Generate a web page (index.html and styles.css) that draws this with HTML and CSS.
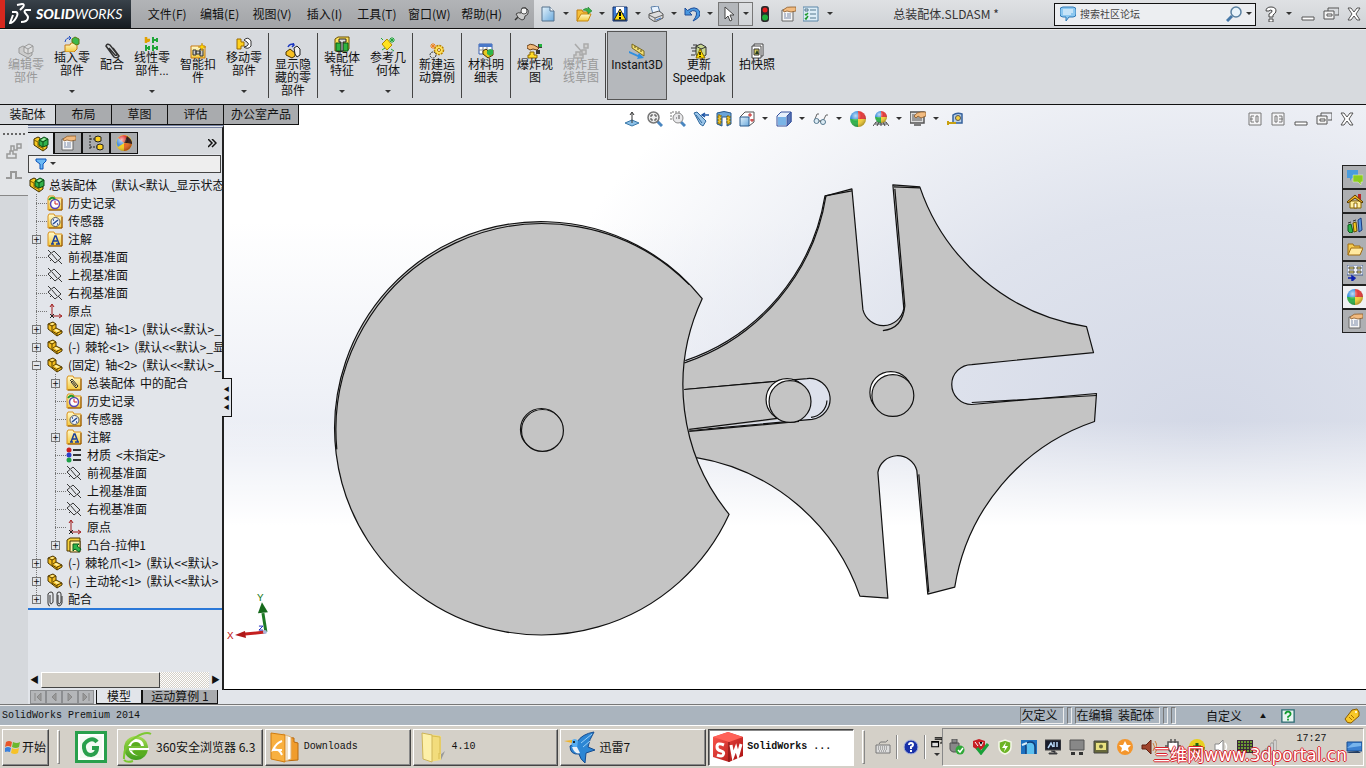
FILE: index.html
```html
<!DOCTYPE html>
<html lang="zh-CN">

<head>
  <meta charset="UTF-8">
  <meta name="viewport" content="width=device-width, initial-scale=1.0">
  <title>总装配体.SLDASM</title>
  <link rel="stylesheet" href="styles.css">
</head>

<body>
  <!-- icon set -->
  <svg class="sprite" width="0" height="0" aria-hidden="true">
    <defs>
      <linearGradient id="g-yellow" x1="0" y1="0" x2="0" y2="1">
        <stop offset="0" stop-color="#fffbd0" />
        <stop offset="1" stop-color="#f3c93c" />
      </linearGradient>
      <linearGradient id="g-blue" x1="0" y1="0" x2="1" y2="1">
        <stop offset="0" stop-color="#e4f3fc" />
        <stop offset="1" stop-color="#6aa9dc" />
      </linearGradient>
      <linearGradient id="g-green" x1="0" y1="0" x2="0" y2="1">
        <stop offset="0" stop-color="#a4dc50" />
        <stop offset="1" stop-color="#3f9d1c" />
      </linearGradient>
      <linearGradient id="g-red" x1="0" y1="0" x2="1" y2="1">
        <stop offset="0" stop-color="#ff5a50" />
        <stop offset="1" stop-color="#a80f10" />
      </linearGradient>
      <radialGradient id="g-shine" cx=".35" cy=".3" r=".7">
        <stop offset="0" stop-color="#fff" stop-opacity=".7" />
        <stop offset=".5" stop-color="#fff" stop-opacity="0" />
        <stop offset="1" stop-color="#000" stop-opacity=".25" />
      </radialGradient>
    </defs>
    <symbol id="i-arrow" viewBox="0 0 6 4"><path d="M0 0h6L3 3z" fill="#333" /></symbol>
    <symbol id="i-asm" viewBox="0 0 16 16">
      <path d="M1 3l4-2 2 1v5l7 3v2l-4 3L1 9z" fill="#f6c821" stroke="#3a2a00" />
      <path d="M1 4l4 2v4l5 2v3" fill="none" stroke="#7a5a00" />
      <path d="M6 4l5-3 4 2v6l-5 2-4-2z" fill="#31b14a" stroke="#0a4a14" />
      <path d="M6 4l4 2 5-3M10 6v5" fill="none" stroke="#0a4a14" />
      <path d="M8 4l3-2 2 1-3 2z" fill="#a9e8a8" />
    </symbol>
    <symbol id="i-asm-gray" viewBox="0 0 16 16">
      <path d="M1 5l4-2 2 1v3l7 3v2l-4 3L1 10z" fill="#ccc" stroke="#999" />
      <path d="M6 4l5-3 4 2v6l-5 2-4-2zM6 4l4 2 5-3M10 6v5" fill="#ddd" stroke="#999" />
    </symbol>
    <symbol id="i-part" viewBox="0 0 16 16">
      <path d="M1 3l5-2 3 2v4l6 3v2l-5 3L1 8z" fill="#f4bd1e" stroke="#4a3400" />
      <path d="M1 3l4 2 4-2M5 5v5M6 9l3-2M10 12l5-2M10 12v3M5 10l5 3" fill="none" stroke="#5a4000" />
      <path d="M3 3l3-1 1 1-2 1zM7 9l2-1 4 2-3 1z" fill="#fff0a0" />
    </symbol>
    <symbol id="i-folder" viewBox="0 0 16 16">
      <path d="M1 3l1-2h5l1 2h7v12H1z" fill="url(#g-yellow)" stroke="#d9921c" />
      <path d="M15 4v11H2" fill="none" stroke="#8a5208" />
    </symbol>
    <symbol id="i-history" viewBox="0 0 16 16">
      <use href="#i-folder" />
      <circle cx="8" cy="9" r="4.500" fill="#fff" stroke="#5a48b8" stroke-width="1.500" />
      <path d="M8 6v3h3" fill="none" stroke="#d02020" />
      <path d="M2 5q3-4 6-1" fill="none" stroke="#1d9a2c" stroke-width="2" />
    </symbol>
    <symbol id="i-sensor" viewBox="0 0 16 16">
      <use href="#i-folder" />
      <circle cx="8.500" cy="9" r="4.500" fill="#e8eef8" stroke="#555" />
      <path d="M6 11l5-4M6 7h1M10 11h1" stroke="#224a90" stroke-width="1.500" />
    </symbol>
    <symbol id="i-note" viewBox="0 0 16 16">
      <use href="#i-folder" />
      <path d="M4 13h3M9 13h4M5 13l3-8h1l3 8M6 10h4" fill="none" stroke="#1c3f9a" stroke-width="1.500" />
    </symbol>
    <symbol id="i-mates" viewBox="0 0 16 16">
      <use href="#i-folder" />
      <path d="M4 6l2-2 6 7-2 2-5-6 1-1 4 5" fill="none" stroke="#333" />
    </symbol>
    <symbol id="i-plane" viewBox="0 0 16 16">
      <path d="M1 7l6-5 7 7-6 5zM1 1l3 3M11 11l4 4M3 12l2-2M5 5l5 6" fill="none" stroke="#222" stroke-width=".900" />
    </symbol>
    <symbol id="i-origin" viewBox="0 0 16 16">
      <path d="M5 13V2M3 4l2-3 2 3M5 13h9M12 11l3 2-3 2" fill="none" stroke="#a01818" />
      <path d="M3 11l4 4M7 11l-4 4" stroke="#222" />
    </symbol>
    <symbol id="i-material" viewBox="0 0 16 16">
      <circle cx="3" cy="3" r="2.500" fill="#c81e1e" /><circle cx="3" cy="8" r="2.500" fill="#2a3ec8" />
      <circle cx="3" cy="13" r="2.500" fill="#1ea048" />
      <path d="M7 3h8M7 8h8M7 13h8" stroke="#333" stroke-width="2" />
    </symbol>
    <symbol id="i-extrude" viewBox="0 0 16 16">
      <path d="M1 3l3-2h10v11l-3 2H1z" fill="#f7d23c" stroke="#4a3400" />
      <path d="M4 4h10v11H4z" fill="#fdf0a8" stroke="#4a3400" />
      <path d="M7 7h6l-2 2 4 3-2 3-4-3-2 2z" fill="#2db44a" stroke="#0a5a1c" />
    </symbol>
    <symbol id="i-clips" viewBox="0 0 16 16">
      <path d="M3 4v7q0 2 1 2t2-2V3q0-2-2-2T1 3v9q0 3 2 3M11 4v7q0 2 1 2t2-2V3q0-2-2-2t-2 2v9q0 3 2 3t3-3V5" fill="none" stroke="#333" />
    </symbol>
    <symbol id="i-clip" viewBox="0 0 16 16">
      <path d="M5 5l6 7q2 1 2-1L6 2Q3 0 2 3l8 11q3 2 5-1L9 5" fill="none" stroke="#333" stroke-width="1.500" />
    </symbol>
    <symbol id="i-insert" viewBox="0 0 16 16">
      <path d="M1 9h5l1-2h6v6l-3 3H1z" fill="url(#g-yellow)" stroke="#c87a10" />
      <path d="M8 3l3-2 4 2v5l-3 1-4-3z" fill="#3db84c" stroke="#5a7a10" />
      <path d="M1 6q1-5 6-4M5 0l2 2-2 2" fill="none" stroke="#1c48c0" />
    </symbol>
    <symbol id="i-pattern" viewBox="0 0 16 16">
      <path d="M2 1v6M2 4h4M4 3v3" stroke="#e0a000" stroke-width="2.500" />
      <path d="M9 1v6M9 4h5M13 2v4M2 9v6M2 12h4M5 10v4M9 9v6M9 12h5M13 10v4" stroke="#1fa538" stroke-width="2" />
    </symbol>
    <symbol id="i-smart" viewBox="0 0 16 16">
      <path d="M1 3h14v12H1z" fill="url(#g-yellow)" stroke="#c87a10" />
      <path d="M3 7h3v5H3zM6 8h4v3H6zM10 6h3v7h-3z" fill="#ccc" stroke="#333" />
      <path d="M12 0l1 3 3 1-3 1-1 3-1-3-3-1 3-1z" fill="#ffd800" stroke="#b87800" stroke-width=".500" />
    </symbol>
    <symbol id="i-move" viewBox="0 0 16 16">
      <path d="M1 3h4v3h3v4H5v3H1z" fill="#ffd21e" stroke="#9a6a00" />
      <path d="M8 4q4-4 7 1v5q-3 4-7 1l3-1q3-2 0-4z" fill="#fff" stroke="#333" />
    </symbol>
    <symbol id="i-showhide" viewBox="0 0 16 16">
      <path d="M1 9l4-3 5 4v3l-3 2-6-3z" fill="#f6c021" stroke="#4a3400" />
      <path d="M9 5l3-2 3 3v6l-3 2-2-3z" fill="#eee" stroke="#222" />
      <path d="M3 4q2-4 6-2M8 0l1 2-2 2" fill="none" stroke="#1c38c0" stroke-width="1.500" />
    </symbol>
    <symbol id="i-feature" viewBox="0 0 16 16">
      <path d="M1 3l3-2h11v12l-3 2H1z" fill="#ffe25a" stroke="#6a5000" />
      <path d="M2 7h12v8H2z" fill="#2fb440" stroke="#0a5a14" />
      <path d="M5 3h7v3H9v9H7V6H5z" fill="#ddd" stroke="#222" />
    </symbol>
    <symbol id="i-refgeo" viewBox="0 0 16 16">
      <path d="M2 8l5-5 5 6-5 5z" fill="#ffe21e" stroke="#b08a00" />
      <path d="M12 1v6M9 4h6M10 2l4 4M14 2l-4 4M1 2l2 2M2 14l3-2M11 13l3 2" stroke="#1fa538" />
    </symbol>
    <symbol id="i-study" viewBox="0 0 16 16">
      <circle cx="10" cy="7" r="4.500" fill="#ffe25a" stroke="#b88000" stroke-width="1.500" stroke-dasharray="2 1" />
      <circle cx="10" cy="7" r="1.500" fill="#fff" stroke="#a87000" />
      <circle cx="4" cy="12" r="3" fill="#ddd" stroke="#333" stroke-dasharray="2 1" />
      <path d="M4 0v6M1 3h6M2 1l4 4M6 1L2 5" stroke="#f08018" />
    </symbol>
    <symbol id="i-bom" viewBox="0 0 16 16">
      <path d="M1 1h13v10H1z" fill="#fff" stroke="#3860b0" /><path d="M1 1h13v3H1z" fill="#4a78c8" />
      <path d="M1 7h13M5 4v7M9 4v7" stroke="#888" />
      <path d="M5 8l3-2 3 3 4-2v5l-5 3-5-4z" fill="#e8c820" stroke="#4a3400" />
      <path d="M9 8l3-2 3 1v4l-3 2-3-2z" fill="#2db44a" />
    </symbol>
    <symbol id="i-explode" viewBox="0 0 16 16">
      <path d="M3 9h4v3h3v3H1v-3h2z" fill="#ffdc28" stroke="#8a6400" />
      <path d="M11 1h4v4h-4zM9 7h4v4H9z" fill="#3a3a3a" /><path d="M12 1h3v3h-3z" fill="#21b33c" />
      <path d="M0 3q3-3 7-1l5 3-2 2-4-1-3 1-3-2z" fill="#f0b878" stroke="#6a4018" />
    </symbol>
    <symbol id="i-explode-gray" viewBox="0 0 16 16">
      <path d="M3 9h4v3h3v3H1v-3h2zM11 1h4v4h-4zM9 7h4v4H9zM2 1l7 8" fill="#d0d0d0" stroke="#aaa" stroke-width="1.500" />
    </symbol>
    <symbol id="i-instant" viewBox="0 0 16 16">
      <path d="M3 1l12 7v5L3 5z" fill="#f4e074" stroke="#7a6a20" />
      <path d="M6 3v2M9 5v2M12 7v2" stroke="#5a4a10" />
      <path d="M0 8l9 4 1-2 5 5-7 1 1-2-9-4z" fill="#2f8fe0" />
    </symbol>
    <symbol id="i-speedpak" viewBox="0 0 16 16">
      <path d="M5 3l5-2 5 3v8l-5 3-5-3z" fill="#c9d890" stroke="#333" />
      <path d="M5 3l5 3 5-2M10 6v9M0 5h6M1 8h4M0 12h4M2 2h4" fill="none" stroke="#333" />
      <path d="M9 6l5 9H5z" fill="#ffe000" stroke="#8a6a00" /><path d="M9 9v3M9 13v1" stroke="#000" stroke-width="1.500" />
    </symbol>
    <symbol id="i-photo" viewBox="0 0 16 16">
      <path d="M5 1h9v12H5z" fill="#fff" stroke="#444" /><path d="M3 3h9v12H3z" fill="#fff" stroke="#444" />
      <path d="M5 6h5v6H5z" fill="#d8cc60" stroke="#333" /><path d="M6 11l2-4 2 4z" fill="#223a22" />
    </symbol>
    <symbol id="i-new" viewBox="0 0 16 16"><path d="M2 1h8l4 4v10H2z" fill="url(#g-blue)" stroke="#55708c" /><path d="M10 1v4h4" fill="#fff" stroke="#55708c" /></symbol>
    <symbol id="i-open" viewBox="0 0 16 16">
      <path d="M1 4h5l1 2h5v3H5l-3 6H1z" fill="#f6c03a" stroke="#c07c10" /><path d="M5 8h10l-3 7H1z" fill="url(#g-yellow)" stroke="#c88810" />
      <path d="M7 4q3-3 5-1V1l4 4-4 3V6q-2-2-5-2" fill="#39b148" stroke="#147a24" stroke-width=".500" />
    </symbol>
    <symbol id="i-save" viewBox="0 0 16 16">
      <path d="M1 1h14v14H1z" fill="#3a78d0" stroke="#122e68" /><path d="M4 1h8v6H4z" fill="#fff" />
      <path d="M8 3l6 11H2z" fill="#ffdf10" stroke="#222" /><path d="M8 6v4M8 11v2" stroke="#000" stroke-width="2" />
    </symbol>
    <symbol id="i-print" viewBox="0 0 16 16">
      <path d="M3 1l7-1 2 6-7 2z" fill="#e8f3ff" stroke="#5a7ea8" /><path d="M1 8l10-3 4 3v4l-8 4-6-4z" fill="#ddd" stroke="#555" />
      <path d="M1 9l6 3 8-3M7 12v4" fill="none" stroke="#666" /><path d="M8 14l5-2" stroke="#3a78d0" />
    </symbol>
    <symbol id="i-undo" viewBox="0 0 16 16"><path d="M1 2v7h7L5.500 6.500q3-3 6-1.500 3 3-2.500 10 9-4 6.500-10Q11-1 3.500 4.500z" fill="#4a98e0" stroke="#1c4c98" /></symbol>
    <symbol id="i-cursor" viewBox="0 0 16 16"><path d="M4 1v12l3-3 2 5 2-1-2-5h4z" fill="#fff" stroke="#444" /></symbol>
    <symbol id="i-traffic" viewBox="0 0 16 16"><rect x="4" width="8" height="16" rx="3" fill="#2a2a2a" /><circle cx="8" cy="4" r="2.500" fill="#e81c1c" /><circle cx="8" cy="11.500" r="3" fill="#1fae3a" /></symbol>
    <symbol id="i-props" viewBox="0 0 16 16">
      <path d="M2 4h11v11H2z" fill="#f6f6f6" stroke="#666" /><path d="M4 8h2M7 8h4M4 10h2M7 10h4M4 12h7" stroke="#7a8aa8" />
      <path d="M3 4q4-4 9-3h4v4l-5 1-4-1-3 1z" fill="#f2bb80" stroke="#8a5a2a" stroke-width=".800" />
    </symbol>
    <symbol id="i-list" viewBox="0 0 16 16"><path d="M0 1h15v14H0z" fill="#dcecf6" stroke="#5a86a8" /><path d="M7 4h6M7 8h6M7 12h6M2 3h3v2H2z" fill="none" stroke="#55788e" /><path d="M2 8l1 1 2-2M2 12l1 1 2-3" fill="none" stroke="#1e9a2c" stroke-width="1.500" /></symbol>
    <symbol id="i-pin" viewBox="0 0 16 16"><path d="M2 14l4-4" stroke="#333" stroke-width="1.500" /><path d="M3 8q2-2 5-1l1-5q4-2 6 2 1 5-3 6 0 4-3 4-4-1-6-6" fill="#ccc" stroke="#444" /><circle cx="11" cy="5" r="3" fill="#f4f4f4" stroke="#555" /></symbol>
    <symbol id="i-bubble" viewBox="0 0 16 16"><path d="M3 1h10q3 0 3 3v4q0 3-3 3H9l-3 4v-4H3q-3 0-3-3V4q0-3 3-3z" fill="#8cc8f0" stroke="#2f7ab8" /><path d="M3 4h10M3 6h10M3 8h8" stroke="#fff" /></symbol>
    <symbol id="i-search" viewBox="0 0 16 16"><path d="M1 15l5-5" stroke="#4678a8" stroke-width="3" /><circle cx="10" cy="6" r="5" fill="#e8f3fa" stroke="#5a80a0" stroke-width="1.500" /></symbol>
    <symbol id="i-help" viewBox="0 0 16 16"><path d="M3 5q0-4 5-4t5 4q0 2-3 4v2H6V8q4-2 3-3.500-2-1-3 .500zM6 13h4v3H6z" fill="#fff" stroke="#444" /></symbol>
    <symbol id="i-min" viewBox="0 0 16 16"><path d="M2 11h12v3H2z" fill="#fff" stroke="#555" /></symbol>
    <symbol id="i-restore" viewBox="0 0 16 16"><path d="M5 2h11v7h-4M5 2v3" fill="none" stroke="#555" /><path d="M1 5h10v8H1z" fill="#f4f4f4" stroke="#555" /><path d="M4 8h5v2H4z" fill="#fff" stroke="#555" /></symbol>
    <symbol id="i-close" viewBox="0 0 16 16"><path d="M2 2h3l3 4 3-4h3l-4 6 4 6h-3l-3-4-3 4H2l4-6z" fill="#fff" stroke="#555" /></symbol>
    <symbol id="i-paneL" viewBox="0 0 16 16"><path d="M2 2h12v12H2z" fill="#f4f4f6" stroke="#777" /><path d="M7 5H4v6h3M3 8h3M9 5h2v6H9z" fill="none" stroke="#777" /></symbol>
    <symbol id="i-paneR" viewBox="0 0 16 16"><path d="M2 2h12v12H2z" fill="#f4f4f6" stroke="#777" /><path d="M5 5h2v6H5zM9 5h3v6H9M9 8h4" fill="none" stroke="#777" /></symbol>
    <symbol id="i-normal" viewBox="0 0 16 16"><path d="M1 12l7-3 7 3-7 3z" fill="#8ac0e8" stroke="#3a78a8" /><path d="M8 12V2M6 4l2-3 2 3" fill="none" stroke="#333" /></symbol>
    <symbol id="i-zoomfit" viewBox="0 0 16 16"><path d="M10 10l5 5" stroke="#4a86c0" stroke-width="3" /><circle cx="6.500" cy="6.500" r="5.500" fill="#eee" stroke="#777" stroke-width="1.500" /><path d="M4 6V4h2M7 4h2v2M4 7v2h2M9 7v2H7" fill="none" stroke="#444" /></symbol>
    <symbol id="i-zoomarea" viewBox="0 0 16 16"><path d="M1 9V1h9" fill="none" stroke="#777" stroke-dasharray="2 1" /><path d="M11 11l4 4" stroke="#4a86c0" stroke-width="3" /><circle cx="8" cy="7" r="5" fill="#e8e8ea" stroke="#888" /><path d="M6 7h1M9 4v4" stroke="#555" /></symbol>
    <symbol id="i-prev" viewBox="0 0 16 16"><path d="M1 2l3-1 9 9-3 5-3-2z" fill="#9ac4e8" stroke="#2f689c" /><path d="M3 4l6 8" stroke="#2f689c" /><path d="M10 4h6M12 2l-3 2 3 2" fill="none" stroke="#2058a8" stroke-width="1.500" /></symbol>
    <symbol id="i-section" viewBox="0 0 16 16"><path d="M1 2q7-3 14 0v11l-4 2V6H6v9l-5-2z" fill="#6aa4d8" stroke="#2a5a8c" /><path d="M2 4h3v9H2zM11 5h3v8h-3z" fill="#e8c030" stroke="#7a6000" stroke-dasharray="2 1" /></symbol>
    <symbol id="i-orient" viewBox="0 0 16 16"><path d="M1 6l5-5h9v10l-5 4z" fill="#fff" stroke="#555" /><path d="M11 2v4M9 4h4M13 8v3M11 9h4" stroke="#c02020" /><path d="M1 6h9v9H1z" fill="url(#g-blue)" stroke="#2a5a8c" /></symbol>
    <symbol id="i-cube" viewBox="0 0 16 16"><path d="M1 5l4-4h10v10l-4 4H1z" fill="#e6f0fb" stroke="#35509c" /><path d="M2 6h8v8H2z" fill="#7ab4e6" /><path d="M11 15V5l4-4v10z" fill="#5a78b8" stroke="#35509c" /></symbol>
    <symbol id="i-glasses" viewBox="0 0 16 16"><path d="M2 8l2-5h2M10 10l3-6h2" fill="none" stroke="#666" /><circle cx="3.500" cy="10" r="2.500" fill="#dcebf4" stroke="#55788e" /><circle cx="10" cy="11" r="2.500" fill="#dcebf4" stroke="#55788e" /><path d="M6 10h2" stroke="#555" /></symbol>
    <symbol id="i-ball" viewBox="0 0 16 16"><path d="M8 0a8 8 0 0 0-8 8h8z" fill="#2f8adc" /><path d="M8 0a8 8 0 0 1 8 8H8z" fill="#e23a3a" /><path d="M0 8a8 8 0 0 0 8 8V8z" fill="#2fb14a" /><path d="M16 8a8 8 0 0 1-8 8V8z" fill="#f4cf3a" /><circle cx="8" cy="8" r="8" fill="url(#g-shine)" /></symbol>
    <symbol id="i-scene" viewBox="0 0 16 16"><path d="M0 15l3-4h10l3 4M2 13h12M6 11l-2 4M10 11l2 4M8 10v5" fill="none" stroke="#444" /><use href="#i-ball" x="2" y="0" width="12" height="12" /></symbol>
    <symbol id="i-display" viewBox="0 0 16 16"><path d="M0 1h14v11H0zM4 14h7" fill="#ddd" stroke="#555" stroke-width="1.500" /><path d="M2 3h10v7H2z" fill="#999" /><path d="M4 5q3-4 7-4h5v4l-5 2-3-2-2 2z" fill="#f2bb80" stroke="#8a5a2a" stroke-width=".800" /></symbol>
    <symbol id="i-tape" viewBox="0 0 16 16"><path d="M6 12V4q4-3 9-1v9z" fill="#b8d0e8" stroke="#35609c" stroke-width="1.500" /><circle cx="11" cy="7" r="2.500" fill="#f4d040" stroke="#555" /><path d="M0 12h9M1 10v4" stroke="#c8a010" stroke-width="2" /></symbol>
    <symbol id="i-config" viewBox="0 0 16 16"><path d="M2 0v15M2 4h5M2 12h7" fill="none" stroke="#222" stroke-dasharray="2 1" /><path d="M7 2l3-1 3 1v4l-3 1-3-1zM9 10l3-1 3 1v4l-3 1-3-1z" fill="#ffd21e" stroke="#222" /></symbol>
    <symbol id="i-ball2" viewBox="0 0 16 16"><circle cx="8" cy="8" r="8" fill="#f6cf20" /><path d="M8 8L2 3a8 8 0 0 1 9-2z" fill="#e02828" /><path d="M8 8L2 3a8 8 0 0 0 0 9z" fill="#4a90e0" /><path d="M8 8l3-7q5 3 5 8z" fill="#301818" /><path d="M8 8l8 1q-2 7-8 7z" fill="#e86820" /><circle cx="8" cy="8" r="8" fill="url(#g-shine)" /></symbol>
    <symbol id="i-filter" viewBox="0 0 12 12"><path d="M1 1h10v2L8 6v5H5V6L1 3z" fill="#6ab8f4" stroke="#0a50b8" /></symbol>
    <symbol id="i-chat" viewBox="0 0 16 16"><path d="M0 1h11v8H5l-2 3V9H0z" fill="#4a9cdc" /><path d="M6 6h10v7h-2v3l-3-3H6z" fill="#8ccc20" stroke="#e8f4d0" stroke-width=".500" /></symbol>
    <symbol id="i-home" viewBox="0 0 16 16"><path d="M11 1h3v6h-3z" fill="#b82828" /><path d="M3 8h11v7H3z" fill="#fff0a0" stroke="#8a6400" /><path d="M0 9l8-7 8 7-1 1-7-5-7 5z" fill="#f4b820" stroke="#5a3c00" /><path d="M7 10h3v5H7z" fill="#fff" stroke="#8a6400" /></symbol>
    <symbol id="i-library" viewBox="0 0 16 16"><path d="M1 8l3-1 2 8-3 1-2-2z" fill="#2db44a" stroke="#0a5a1c" /><path d="M6 6l3-1 1 9-3 1z" fill="#f4c820" stroke="#6a5000" /><path d="M11 3l3-2 1 12-3 2z" fill="#5a98e0" stroke="#1a3a80" /><path d="M1 6l3-1M6 4l3-1" stroke="#333" /></symbol>
    <symbol id="i-fold" viewBox="0 0 16 16"><path d="M1 14V3h5l1 2h6v2" fill="#f6cc50" stroke="#a06c10" /><path d="M4 7h12l-3 7H1z" fill="#ffe9a0" stroke="#a06c10" /></symbol>
    <symbol id="i-palette" viewBox="0 0 16 16"><path d="M0 0h16v10H0z" fill="#eef2fa" stroke="#445a88" /><path d="M2 2h5v2H2zM10 2h4v2h-4zM2 6h5v2H2zM10 6h4v2h-4z" fill="#f0dc60" stroke="#555" /><path d="M1 13h5M5 11l3 2-3 3z" fill="#0c20b0" stroke="#0c20b0" stroke-width="1.500" /></symbol>
    <symbol id="i-sketch1" viewBox="0 0 16 16"><path d="M1 15v-4h3V8h3v3h3v4zM5 8V3h3v4h3V3M11 1h4v4h-4z" fill="none" stroke="#999" stroke-width="1.500" /></symbol>
    <symbol id="i-sketch2" viewBox="0 0 16 16"><path d="M0 11h5V5h5v6h6" fill="none" stroke="#999" stroke-width="2" /></symbol>
    <symbol id="i-qmark" viewBox="0 0 16 16"><path d="M1 1h14v14H1z" fill="#e8f4f0" stroke="#2a6a70" stroke-width="1.500" /><path d="M5 6q0-3 3-3t3 3q0 1-3 3v1M8 11v2" fill="none" stroke="#0c9a2c" stroke-width="2" /></symbol>
    <symbol id="i-tag" viewBox="0 0 16 16"><path d="M8 2l5-1 2 3v4l-8 7q-4 1-6-4z" fill="#f8c828" stroke="#8a5a00" /><path d="M5 9l3 3M7 7l3 3" stroke="#a87000" /><circle cx="12" cy="4" r="1" fill="#fff" /></symbol>
    <symbol id="i-windows" viewBox="0 0 16 16"><path d="M1 3q3-2 6 0L6 8Q3 6 0 8z" fill="#e8562a" /><path d="M8 3q4 2 7 0l-1 5q-3 2-7 0z" fill="#6ab82c" /><path d="M0 9q3-2 6 0l-1 4q-3-1-5 0z" fill="#3a80dc" /><path d="M7 9q3 2 7 0l-1 5q-3 2-7 0z" fill="#f6c228" /></symbol>
    <symbol id="i-g" viewBox="0 0 32 32"><path d="M0 0h32v32H0z" fill="#28a04c" /><path d="M3 3h26v26H3z" fill="#fff" /><path d="M5 5h22v22H5z" fill="#f4fbf4" /><path d="M22 11q-3-4-8-2-6 3-5 8 1 7 7 7 6-1 6-7h-5" fill="none" stroke="#28a04c" stroke-width="4" /></symbol>
    <symbol id="i-browser" viewBox="0 0 32 32"><circle cx="15" cy="17" r="12" fill="url(#g-green)" /><path d="M7 15q2-7 8-7 7 0 8 7zM8 19h20v-2H8zM8 19q4 9 16 3" fill="#fff" /><path d="M10 15q1-4 5-4t5 4zM11 20h15q-2 5-8 5-5-1-7-5z" fill="#58ac20" /><path d="M3 28Q2 14 15 6 25 0 30 3M3 29q3 3 9 1" fill="none" stroke="#7cc832" stroke-width="2" /></symbol>
    <symbol id="i-dl" viewBox="0 0 32 32"><path d="M16 6l9 1v4l4 1v17l-13 1z" fill="#f09c2c" stroke="#b86a10" /><path d="M14 3l8 3v22l-8 3z" fill="#fff" stroke="#e0b070" /><path d="M18 4v25" stroke="#ddc090" /><path d="M2 2l14 2v27L2 28z" fill="#f8b040" stroke="#d07c10" /><path d="M13 10q-6 2-9 9 6-2 9 5M4 19h9" fill="none" stroke="#fff" stroke-width="2" /></symbol>
    <symbol id="i-bigfolder" viewBox="0 0 32 32"><path d="M22 25l6-5-4 9z" fill="#999" /><path d="M12 3l12 2v24l-12 2z" fill="#f2dc7c" /><path d="M5 2l10 2v27L6 28z" fill="#fdf0a8" stroke="#cdb458" /><path d="M15 5l8 1v17M22 22v6" fill="none" stroke="#d8bc50" /></symbol>
    <symbol id="i-bird" viewBox="0 0 32 32"><path d="M13 11Q18 3 30 1q-5 8-6 15l7 3-9 3-1 10q-5-4-6-9-9 1-9-8z" fill="#2c86d4" stroke="#164c90" /><path d="M7 10q4-4 7 0l-1 7q-5 1-6-7" fill="#58aef0" /><path d="M0 10l8-1v3z" fill="#f0b428" /><path d="M8 16q3 8 8 6l-3-6z" fill="#e8f0f8" /><path d="M17 12L28 3M19 16l7-6" stroke="#9ad0f8" /><circle cx="10" cy="11" r="1" /></symbol>
    <symbol id="i-sw" viewBox="0 0 32 32"><path d="M16 1l15 5v19L17 31 1 26V6z" fill="url(#g-red)" /><path d="M1 6l15-5 15 5-14 5z" fill="#ff6258" /><path d="M17 11v20" stroke="#701010" /><path d="M12 14q-7-3-7 2 0 3 4 4t2 4q-1 2-6 0" fill="none" stroke="#fff" stroke-width="3" /><path d="M19 14l2 11 3-8 2 7 3-11" fill="none" stroke="#fff" stroke-width="3" /></symbol>
    <symbol id="i-kbd" viewBox="0 0 16 16"><path d="M1 6h14v8H1z" fill="#ddd" stroke="#777" /><path d="M3 8h10M3 10h10M4 12h8" stroke="#777" stroke-dasharray="1 1" /><path d="M4 5q1-3 4-2t5-2" fill="none" stroke="#777" /></symbol>
    <symbol id="i-qball" viewBox="0 0 16 16"><circle cx="8" cy="8" r="7" fill="#1830a8" stroke="#aab4dc" /><path d="M6 6q0-2 2-2t2 2q0 1-2 2v2M8 11v2" fill="none" stroke="#fff" stroke-width="2" /></symbol>
    <symbol id="i-usb" viewBox="0 0 16 16"><path d="M3 0h5v4H3zM1 4h9v6q-2 3-3 3H4q-3-1-3-3z" fill="#888" stroke="#555" /><circle cx="11" cy="11" r="4.500" fill="#30a838" /><path d="M9 11l2 2 3-4" fill="none" stroke="#fff" stroke-width="1.500" /></symbol>
    <symbol id="i-swcheck" viewBox="0 0 16 16"><path d="M0 2l6-2 6 2v6l-6 4-6-4z" fill="#c81e24" /><path d="M2 3l3 4M6 3l2 4 2-4" stroke="#fff" /><path d="M4 9l4 5 7-9" fill="none" stroke="#18a038" stroke-width="3" /></symbol>
    <symbol id="i-shield" viewBox="0 0 16 16"><path d="M8 1l6 2v5q0 5-6 7-6-2-6-7V3z" fill="#6cb424" stroke="#f4f8e8" stroke-width="1.500" /><path d="M9 3L5 9h3l-1 4 4-6H8z" fill="#fff" /></symbol>
    <symbol id="i-bluebox" viewBox="0 0 16 16"><path d="M0 1h16v14H0z" fill="#1c70c0" /><path d="M5 15V8q-1-5 4-5t5 5v7" fill="#5cc0f0" stroke="#123c78" stroke-width="1.500" /><path d="M1 6l5-2" stroke="#d8ecf8" stroke-width="2" /></symbol>
    <symbol id="i-monitor" viewBox="0 0 16 16"><path d="M0 1h16v10H0zM6 12h4v2H4v1h8v-1h-2" fill="#181c2c" stroke="#444" /><path d="M3 9l3-5 2 4M9 3v5M12 3v5" fill="none" stroke="#b8d8f8" stroke-width="1.500" /></symbol>
    <symbol id="i-graybox" viewBox="0 0 16 16"><path d="M1 1h14v10H1z" fill="#888" stroke="#555" /><path d="M2 13h4v3H2zM10 13h4v3h-4z" fill="#333" /></symbol>
    <symbol id="i-card" viewBox="0 0 16 16"><path d="M1 2h14v12H1z" fill="#66683a" stroke="#444" /><path d="M3 4h10v7H3z" fill="#e8e080" /><circle cx="8" cy="7.500" r="2" fill="#66683a" /></symbol>
    <symbol id="i-star" viewBox="0 0 16 16"><circle cx="8" cy="8" r="8" fill="#f4962c" /><path d="M8 2l2 4h4l-3 3 1 4-4-2-4 2 1-4-3-3h4z" fill="#fff" /></symbol>
    <symbol id="i-horn" viewBox="0 0 16 16"><path d="M1 6h4l5-5v14L5 10H1z" fill="#a0442c" stroke="#602010" /><path d="M12 4q3 4 0 8M14 2q4 6 0 12" fill="none" stroke="#d08040" /></symbol>
    <symbol id="i-plug" viewBox="0 0 16 16"><path d="M3 3h10v6q-1 4-5 4T3 9zM6 0v4M10 0v4M8 13v3M0 7h3M13 7h3" fill="#fff" stroke="#555" stroke-width="1.500" /></symbol>
    <symbol id="i-plusball" viewBox="0 0 16 16"><circle cx="8" cy="8" r="8" fill="#e8d020" /><path d="M0 8a8 8 0 0 0 16 0z" fill="#48a428" /><path d="M8 4v8M4 8h8" stroke="#186018" stroke-width="3" /></symbol>
    <symbol id="i-speaker" viewBox="0 0 16 16"><path d="M2 5h4l4-4v14l-4-4H2z" fill="#fff" stroke="#888" /><path d="M12 4q3 4 0 8" fill="none" stroke="#fff" stroke-width="1.500" /></symbol>
    <symbol id="i-grid" viewBox="0 0 16 16"><path d="M0 1h16v13H0z" fill="#3a2838" /><path d="M1 3h14M1 6h14M1 9h14M1 12h14" stroke="#7ac030" stroke-dasharray="2 1" stroke-width="1.500" /></symbol>
    <symbol id="i-signal" viewBox="0 0 16 16"><path d="M1 12h2v3H1zM4 10h2v5H4zM7 7h2v8H7zM10 4h2v11h-2zM13 1h2v14h-2z" fill="#fff" stroke="#777" stroke-width=".700" /></symbol>
    <symbol id="i-desktop" viewBox="0 0 16 16"><path d="M1 3h15v9H1z" fill="#3c80d0" stroke="#164c90" /><path d="M0 13l12-1 3 2H3z" fill="#223c60" /><path d="M1 9l6-5h8v3z" fill="#78b4ec" /></symbol>
    <symbol id="i-wins" viewBox="0 0 16 16"><path d="M5 1h10v7h-3M5 3h10" fill="none" stroke="#000" stroke-width="1.500" /><path d="M1 6h9v7H1zM1 7h9" fill="#ddd" stroke="#000" stroke-width="1.500" /></symbol>
  </svg>

  <header class="titlebar">
    <div class="logo">
      <svg width="24" height="22" viewBox="0 0 24 22" aria-hidden="true">
        <path d="M8 2l5-1q3 0 1 3l-3 3M3 9h4q3 1 0 6t-6 5l3-8M22 7h-5q-3 1 0 4 4 4 0 7-2 1-5 1" fill="none" stroke="#fff" stroke-width="2" />
      </svg>
      <span><b>SOLID</b>WORKS</span>
    </div>
    <nav class="menus">
      <button>文件(F)</button><button>编辑(E)</button><button>视图(V)</button><button>插入(I)</button>
      <button>工具(T)</button><button>窗口(W)</button><button>帮助(H)</button>
      <button class="pin" aria-label="固定"><svg class="icon"><use href="#i-pin" /></svg></button>
    </nav>
    <div class="quick">
      <button aria-label="新建"><svg class="icon"><use href="#i-new" /></svg></button><button class="drop" aria-label="更多"><svg><use href="#i-arrow" /></svg></button>
      <button aria-label="打开"><svg class="icon"><use href="#i-open" /></svg></button><button class="drop" aria-label="更多"><svg><use href="#i-arrow" /></svg></button>
      <button aria-label="保存"><svg class="icon"><use href="#i-save" /></svg></button><button class="drop" aria-label="更多"><svg><use href="#i-arrow" /></svg></button>
      <button aria-label="打印"><svg class="icon"><use href="#i-print" /></svg></button><button class="drop" aria-label="更多"><svg><use href="#i-arrow" /></svg></button>
      <button aria-label="撤消"><svg class="icon"><use href="#i-undo" /></svg></button><button class="drop" aria-label="更多"><svg><use href="#i-arrow" /></svg></button>
      <span class="split"><button class="on" aria-label="选择"><svg class="icon"><use href="#i-cursor" /></svg></button><button class="drop" aria-label="更多"><svg><use href="#i-arrow" /></svg></button></span>
      <button class="wide" aria-label="重建"><svg class="icon"><use href="#i-traffic" /></svg></button>
      <button class="wide" aria-label="属性"><svg class="icon"><use href="#i-props" /></svg></button>
      <button class="wide" aria-label="选项"><svg class="icon"><use href="#i-list" /></svg></button><button class="drop" aria-label="更多"><svg><use href="#i-arrow" /></svg></button>
    </div>
    <h1 class="doc-title">总装配体.SLDASM *</h1>
    <div class="search">
      <svg class="icon"><use href="#i-bubble" /></svg>
      <input type="text" placeholder="搜索社区论坛" aria-label="搜索社区论坛">
      <button aria-label="搜索"><svg class="icon"><use href="#i-search" /></svg></button>
      <button class="drop" aria-label="更多"><svg><use href="#i-arrow" /></svg></button>
    </div>
    <div class="window-buttons">
      <button aria-label="帮助"><svg class="icon"><use href="#i-help" /></svg></button><button class="drop" aria-label="更多"><svg><use href="#i-arrow" /></svg></button>
      <button aria-label="最小化"><svg class="icon"><use href="#i-min" /></svg></button>
      <button aria-label="还原"><svg class="icon"><use href="#i-restore" /></svg></button>
      <button aria-label="关闭"><svg class="icon"><use href="#i-close" /></svg></button>
    </div>
  </header>

  <div class="ribbon">
    <button disabled><svg class="icon"><use href="#i-asm-gray" /></svg><span>编辑零<br>部件</span></button>
    <button class="has-menu"><svg class="icon"><use href="#i-insert" /></svg><span>插入零<br>部件</span><svg class="caret"><use href="#i-arrow" /></svg></button>
    <button class="narrow"><svg class="icon"><use href="#i-clip" /></svg><span>配合</span></button>
    <button class="has-menu"><svg class="icon"><use href="#i-pattern" /></svg><span>线性零<br>部件...</span><svg class="caret"><use href="#i-arrow" /></svg></button>
    <button><svg class="icon"><use href="#i-smart" /></svg><span>智能扣<br>件</span></button>
    <button class="has-menu"><svg class="icon"><use href="#i-move" /></svg><span>移动零<br>部件</span><svg class="caret"><use href="#i-arrow" /></svg></button>
    <i class="sep"></i>
    <button><svg class="icon"><use href="#i-showhide" /></svg><span>显示隐<br>藏的零<br>部件</span></button>
    <i class="sep"></i>
    <button class="has-menu"><svg class="icon"><use href="#i-feature" /></svg><span>装配体<br>特征</span><svg class="caret"><use href="#i-arrow" /></svg></button>
    <button class="has-menu"><svg class="icon"><use href="#i-refgeo" /></svg><span>参考几<br>何体</span><svg class="caret"><use href="#i-arrow" /></svg></button>
    <i class="sep"></i>
    <button><svg class="icon"><use href="#i-study" /></svg><span>新建运<br>动算例</span></button>
    <i class="sep"></i>
    <button><svg class="icon"><use href="#i-bom" /></svg><span>材料明<br>细表</span></button>
    <i class="sep"></i>
    <button><svg class="icon"><use href="#i-explode" /></svg><span>爆炸视<br>图</span></button>
    <button disabled><svg class="icon"><use href="#i-explode-gray" /></svg><span>爆炸直<br>线草图</span></button>
    <i class="sep"></i>
    <button class="pressed"><svg class="icon"><use href="#i-instant" /></svg><span>Instant3D</span></button>
    <button class="broad"><svg class="icon"><use href="#i-speedpak" /></svg><span>更新<br>Speedpak</span></button>
    <i class="sep"></i>
    <button><svg class="icon"><use href="#i-photo" /></svg><span>拍快照</span></button>
  </div>

  <main class="workspace">
    <nav class="command-tabs">
      <button class="active">装配体</button><button>布局</button><button>草图</button><button>评估</button><button class="last">办公室产品</button>
    </nav>

    <div class="side">
      <div class="strip">
        <svg class="icon"><use href="#i-sketch1" /></svg>
        <svg class="icon"><use href="#i-sketch2" /></svg>
      </div>
      <section class="manager">
        <div class="manager-tabs">
          <button class="active" aria-label="设计树"><svg class="icon"><use href="#i-asm" /></svg></button>
          <button aria-label="属性"><svg class="icon"><use href="#i-props" /></svg></button>
          <button aria-label="配置"><svg class="icon"><use href="#i-config" /></svg></button>
          <button aria-label="外观"><svg class="icon"><use href="#i-ball2" /></svg></button>
          <button class="more" aria-label="更多"><svg width="9" height="9" viewBox="0 0 9 9"><path d="M0 0l4 4-4 4M4 0l4 4-4 4" fill="none" stroke="#111" stroke-width="1.500" /></svg></button>
        </div>
        <div class="filter">
          <svg width="12" height="12"><use href="#i-filter" /></svg>
          <svg class="caret"><use href="#i-arrow" /></svg>
          <input type="text" aria-label="过滤">
        </div>
        <div class="tree">
          <div class="row root"><svg class="icon"><use href="#i-asm" /></svg><span>总装配体</span><span class="config">(默认&lt;默认_显示状态</span></div>
          <ul>
            <li><div class="row"><i></i><svg class="icon"><use href="#i-history" /></svg><span>历史记录</span></div></li>
            <li><div class="row"><i></i><svg class="icon"><use href="#i-sensor" /></svg><span>传感器</span></div></li>
            <li><div class="row"><button aria-label="展开">+</button><svg class="icon"><use href="#i-note" /></svg><span>注解</span></div></li>
            <li><div class="row"><i></i><svg class="icon"><use href="#i-plane" /></svg><span>前视基准面</span></div></li>
            <li><div class="row"><i></i><svg class="icon"><use href="#i-plane" /></svg><span>上视基准面</span></div></li>
            <li><div class="row"><i></i><svg class="icon"><use href="#i-plane" /></svg><span>右视基准面</span></div></li>
            <li><div class="row"><i></i><svg class="icon"><use href="#i-origin" /></svg><span>原点</span></div></li>
            <li><div class="row"><button aria-label="展开">+</button><svg class="icon"><use href="#i-part" /></svg><span>(固定)</span><span>轴&lt;1&gt;</span><span>(默认&lt;&lt;默认&gt;_</span></div></li>
            <li><div class="row"><button aria-label="展开">+</button><svg class="icon"><use href="#i-part" /></svg><span>(-)</span><span>棘轮&lt;1&gt;</span><span>(默认&lt;&lt;默认&gt;_显</span></div></li>
            <li>
              <div class="row"><button aria-label="折叠">−</button><svg class="icon"><use href="#i-part" /></svg><span>(固定)</span><span>轴&lt;2&gt;</span><span>(默认&lt;&lt;默认&gt;_</span></div>
              <ul>
                <li><div class="row"><button aria-label="展开">+</button><svg class="icon"><use href="#i-mates" /></svg><span>总装配体</span><span>中的配合</span></div></li>
                <li><div class="row"><i></i><svg class="icon"><use href="#i-history" /></svg><span>历史记录</span></div></li>
                <li><div class="row"><i></i><svg class="icon"><use href="#i-sensor" /></svg><span>传感器</span></div></li>
                <li><div class="row"><button aria-label="展开">+</button><svg class="icon"><use href="#i-note" /></svg><span>注解</span></div></li>
                <li><div class="row"><i></i><svg class="icon"><use href="#i-material" /></svg><span>材质</span><span>&lt;未指定&gt;</span></div></li>
                <li><div class="row"><i></i><svg class="icon"><use href="#i-plane" /></svg><span>前视基准面</span></div></li>
                <li><div class="row"><i></i><svg class="icon"><use href="#i-plane" /></svg><span>上视基准面</span></div></li>
                <li><div class="row"><i></i><svg class="icon"><use href="#i-plane" /></svg><span>右视基准面</span></div></li>
                <li><div class="row"><i></i><svg class="icon"><use href="#i-origin" /></svg><span>原点</span></div></li>
                <li><div class="row"><button aria-label="展开">+</button><svg class="icon"><use href="#i-extrude" /></svg><span>凸台-拉伸1</span></div></li>
              </ul>
            </li>
            <li><div class="row"><button aria-label="展开">+</button><svg class="icon"><use href="#i-part" /></svg><span>(-)</span><span>棘轮爪&lt;1&gt;</span><span>(默认&lt;&lt;默认&gt;</span></div></li>
            <li><div class="row"><button aria-label="展开">+</button><svg class="icon"><use href="#i-part" /></svg><span>(-)</span><span>主动轮&lt;1&gt;</span><span>(默认&lt;&lt;默认&gt;</span></div></li>
            <li><div class="row"><button aria-label="展开">+</button><svg class="icon"><use href="#i-clips" /></svg><span>配合</span></div></li>
          </ul>
        </div>
        <div class="scrollbar">
          <button aria-label="向左">◀</button><div class="track"><div class="thumb"></div></div><button aria-label="向右">▶</button>
        </div>
        <button class="flyout" aria-label="隐藏面板"><span>◀</span><span>◀</span><span>◀</span></button>
      </section>
    </div>

    <section class="viewport">
      <svg class="model" viewBox="224 104 1141 585" preserveAspectRatio="xMinYMin meet" role="img" aria-label="槽轮机构">
        <g fill="#c4c4c4" stroke="#111" stroke-width="1.200" stroke-linejoin="round">
          <!-- geneva wheel -->
          <path d="M686 362A212 212 0 0 0 827 195L853 188 864 309A21 21 0 0 0 905 308L894 184 921 186A210 210 0 0 0 1088 326L1095 352 973 364A20 20 0 0 0 973 404L1098 393 1096 421A210 210 0 0 0 956 587L929 594 918 470A20 20 0 0 0 879 472L889 598 861 596A210 210 0 0 0 696 457L680 440V362z" />
          <path d="M686 360A210 210 0 0 0 826 195L853 190M895 186L921 187M896 188L906 305Q904 328 884 330M973 402L1098 395M920 474L930 592" fill="none" />
          <!-- slot with driving pin -->
          <path d="M685 389L808 378A20 20 0 0 1 813 419L690 430" fill="#dde1ec" />
          <path d="M685 389L791 380V418L690 430z" stroke="none" />
          <path d="M685 389L775 381M690 429L778 418M690 431L800 421M828 400A18 18 0 0 1 812 417" fill="none" />
          <circle cx="788" cy="399" r="21" fill="#fff" />
          <circle cx="791" cy="401" r="21" />
          <circle cx="892" cy="392" r="21" fill="#fff" />
          <circle cx="894" cy="395" r="21" />
          <!-- driving disc -->
          <path d="M703 298A207 207 0 1 0 730 514A204 204 0 0 1 703 298z" />
          <path d="M690 284A207 207 0 0 0 337 449" fill="none" />
          <circle cx="542" cy="429" r="21" fill="#fff" />
          <circle cx="543" cy="430" r="21" />
        </g>
        <!-- axis triad -->
        <path d="M265 632L245 634" stroke="#c42020" stroke-width="3" />
        <path d="M235 635l10-4 1 7z" fill="#b01818" />
        <path d="M266 632L263 613" stroke="#1d7a24" stroke-width="3" />
        <path d="M262 602l-4 11 10-1z" fill="#166a1c" />
        <path d="M259 626h4l-4 4h4" fill="none" stroke="#2030c0" />
        <circle cx="265" cy="632" r="2" fill="#aab8dc" />
        <text class="axis" x="257" y="601" fill="#1d7a24">Y</text>
        <text class="axis" x="227" y="639" fill="#c42020">X</text>
      </svg>
      <div class="view-bar">
        <div class="view-tools">
          <button aria-label="正视于"><svg class="icon"><use href="#i-normal" /></svg></button>
          <button aria-label="整屏显示"><svg class="icon"><use href="#i-zoomfit" /></svg></button>
          <button aria-label="局部放大"><svg class="icon"><use href="#i-zoomarea" /></svg></button>
          <button aria-label="上一视图"><svg class="icon"><use href="#i-prev" /></svg></button>
          <button aria-label="剖面视图"><svg class="icon"><use href="#i-section" /></svg></button>
          <button aria-label="视图定向"><svg class="icon"><use href="#i-orient" /></svg></button><button class="drop" aria-label="更多"><svg><use href="#i-arrow" /></svg></button>
          <button aria-label="显示样式"><svg class="icon"><use href="#i-cube" /></svg></button><button class="drop" aria-label="更多"><svg><use href="#i-arrow" /></svg></button>
          <button aria-label="隐藏项目"><svg class="icon"><use href="#i-glasses" /></svg></button><button class="drop" aria-label="更多"><svg><use href="#i-arrow" /></svg></button>
          <button aria-label="编辑外观"><svg class="icon"><use href="#i-ball" /></svg></button>
          <button aria-label="应用布景"><svg class="icon"><use href="#i-scene" /></svg></button><button class="drop" aria-label="更多"><svg><use href="#i-arrow" /></svg></button>
          <button aria-label="视图设定"><svg class="icon"><use href="#i-display" /></svg></button><button class="drop" aria-label="更多"><svg><use href="#i-arrow" /></svg></button>
          <button aria-label="测量"><svg class="icon"><use href="#i-tape" /></svg></button>
        </div>
        <div class="view-window">
          <button aria-label="左窗格"><svg class="icon"><use href="#i-paneL" /></svg></button>
          <button aria-label="右窗格"><svg class="icon"><use href="#i-paneR" /></svg></button>
          <button aria-label="最小化"><svg class="icon"><use href="#i-min" /></svg></button>
          <button aria-label="还原"><svg class="icon"><use href="#i-restore" /></svg></button>
          <button aria-label="关闭"><svg class="icon"><use href="#i-close" /></svg></button>
        </div>
      </div>
      <nav class="task-pane">
        <button aria-label="论坛"><svg class="icon"><use href="#i-chat" /></svg></button>
        <button aria-label="资源"><svg class="icon"><use href="#i-home" /></svg></button>
        <button aria-label="设计库"><svg class="icon"><use href="#i-library" /></svg></button>
        <button aria-label="文件探索器"><svg class="icon"><use href="#i-fold" /></svg></button>
        <button aria-label="视图调色板"><svg class="icon"><use href="#i-palette" /></svg></button>
        <button class="active" aria-label="外观"><svg class="icon"><use href="#i-ball" /></svg></button>
        <button aria-label="自定义属性"><svg class="icon"><use href="#i-props" /></svg></button>
      </nav>
    </section>
  </main>

  <div class="sheet-tabs">
    <div class="sheet-nav">
      <button disabled aria-label="第一个"><svg viewBox="0 0 10 10"><path d="M2 1v8M8 1L4 5l4 4z" /></svg></button>
      <button disabled aria-label="上一个"><svg viewBox="0 0 10 10"><path d="M7 1L3 5l4 4z" /></svg></button>
      <button disabled aria-label="下一个"><svg viewBox="0 0 10 10"><path d="M3 1l4 4-4 4z" /></svg></button>
      <button disabled aria-label="最后一个"><svg viewBox="0 0 10 10"><path d="M2 1l4 4-4 4zM8 1v8" /></svg></button>
    </div>
    <button class="sheet active">模型</button><button class="sheet">运动算例 1</button>
  </div>

  <footer class="status">
    <span class="product">SolidWorks Premium 2014</span>
    <span class="cell">欠定义</span><span class="cell blank"></span>
    <span class="cell">在编辑&nbsp; 装配体</span><span class="cell blank"></span><span class="cell blank"></span>
    <button class="custom">自定义<span>▲</span></button>
    <button class="help" aria-label="帮助"><svg width="14" height="14"><use href="#i-qmark" /></svg></button>
    <button class="tag" aria-label="标签"><svg class="icon"><use href="#i-tag" /></svg></button>
  </footer>

  <div class="taskbar">
    <button class="start"><svg class="icon"><use href="#i-windows" /></svg>开始</button>
    <i class="grip"></i>
    <button class="launch" aria-label="G"><svg width="32" height="32"><use href="#i-g" /></svg></button>
    <div class="tasks">
      <button><svg width="32" height="32"><use href="#i-browser" /></svg>360安全浏览器 6.3</button>
      <button class="latin"><svg width="32" height="32"><use href="#i-dl" /></svg>Downloads</button>
      <button class="latin"><svg width="32" height="32"><use href="#i-bigfolder" /></svg>4.10</button>
      <button><svg width="32" height="32"><use href="#i-bird" /></svg>迅雷7</button>
      <button class="latin active"><svg width="32" height="32"><use href="#i-sw" /></svg>SolidWorks ...</button>
    </div>
    <i class="grip"></i>
    <div class="lang">
      <svg class="icon"><use href="#i-kbd" /></svg><i class="line"></i>
      <svg class="icon"><use href="#i-qball" /></svg><i class="line"></i>
      <span class="stack"><svg width="12" height="12"><use href="#i-wins" /></svg><svg class="caret"><use href="#i-arrow" /></svg></span>
    </div>
    <div class="tray">
      <svg class="icon"><use href="#i-usb" /></svg><svg class="icon"><use href="#i-swcheck" /></svg><svg class="icon"><use href="#i-shield" /></svg>
      <svg class="icon"><use href="#i-bluebox" /></svg><svg class="icon"><use href="#i-monitor" /></svg><svg class="icon"><use href="#i-graybox" /></svg>
      <svg class="icon"><use href="#i-card" /></svg><svg class="icon"><use href="#i-star" /></svg><svg class="icon"><use href="#i-horn" /></svg>
      <svg class="icon"><use href="#i-plug" /></svg><svg class="icon"><use href="#i-plusball" /></svg><svg class="icon"><use href="#i-speaker" /></svg>
      <svg class="icon"><use href="#i-grid" /></svg><svg class="icon"><use href="#i-signal" /></svg>
      <time datetime="17:27">17:27</time>
      <svg class="icon"><use href="#i-desktop" /></svg>
      <span class="watermark">三维网www.3dportal.cn</span>
    </div>
  </div>
</body>

</html>
```

FILE: styles.css
```css
:root {
  --chrome: #d7dade;
  --panel: #e2e5ea;
  --gray: #a9abae;
  --line: #111;
  --win: #d4d0c8;
  --ui: Roboto, "Noto Sans CJK SC", sans-serif;
  --cjk: "Noto Sans CJK SC", sans-serif;
  --mono: "Liberation Mono", "Noto Sans CJK SC", monospace;
}

* {
  box-sizing: border-box;
}

body {
  background: var(--chrome);
  color: #111;
  display: flex;
  flex-direction: column;
  font: 12px/16px var(--cjk);
  height: 100vh;
  margin: 0;
  overflow: hidden;
}

button {
  align-items: center;
  background: none;
  border: 0;
  color: inherit;
  display: flex;
  font: inherit;
  justify-content: center;
  padding: 0;
  white-space: nowrap;
}

svg {
  display: block;
  flex: none;
}

.sprite {
  position: absolute;
}

.icon {
  height: 16px;
  width: 16px;
}

.caret,
.drop svg {
  height: 4px;
  width: 6px;
}

/* title bar */
.titlebar {
  align-items: stretch;
  background: linear-gradient(#dfe1e4, #cfd2d6);
  border-bottom: 1px solid var(--line);
  display: flex;
  flex: none;
  height: 29px;
}

.logo {
  align-items: center;
  background: linear-gradient(#39424a, #161b20);
  border-left: 5px solid #d8281e;
  color: #fff;
  display: flex;
  font: italic 14px/16px Lato, sans-serif;
  gap: 3px;
  padding-left: 4px;
  width: 131px;
}

.logo b {
  font-weight: 900;
}

.menus {
  background: linear-gradient(#b2b4b7, #a2a4a7);
  display: flex;
  padding-left: 10px;
  width: 403px;
}

.menus button {
  flex: 1;
}

.menus .pin {
  flex: none;
  width: 26px;
}

.quick,
.split,
.window-buttons,
.view-tools,
.view-window {
  align-items: center;
  display: flex;
}

.quick {
  padding-left: 4px;
}

.quick button {
  height: 22px;
  width: 20px;
}

.quick .drop {
  width: 16px;
}

.quick .wide {
  width: 23px;
}

.split {
  border: 1px solid #777;
}

.split .on {
  background: #b4b7bb;
  border-right: 1px solid #777;
}

.split .drop {
  width: 13px;
}

.doc-title {
  align-self: center;
  color: #333;
  flex: 1;
  font: 12px/16px var(--cjk);
  margin: 0;
  text-align: center;
}

.search {
  align-items: center;
  align-self: center;
  background: #eceef1;
  border: 1px solid var(--line);
  display: flex;
  gap: 4px;
  height: 23px;
  padding: 0 3px 0 5px;
  width: 202px;
}

.search input,
.filter input {
  background: none;
  border: 0;
  flex: 1;
  font: 10px/16px var(--cjk);
  min-width: 0;
  outline: 0;
  padding: 0;
}

.search input::placeholder {
  color: #444;
}

.window-buttons {
  padding: 0 1px 0 3px;
}

.window-buttons button {
  width: 23px;
}

.window-buttons .drop {
  width: 14px;
}

/* ribbon */
.ribbon {
  background: var(--chrome);
  border-bottom: 1px solid var(--line);
  border-top: 1px solid #eee;
  display: flex;
  flex: none;
  height: 76px;
  padding: 1px 0 4px 3px;
}

.ribbon button {
  flex-direction: column;
  font: 12px/13px var(--ui);
  justify-content: flex-start;
  padding-top: 12px;
  width: 46px;
}

.ribbon button:disabled {
  color: #999;
}

.ribbon .has-menu {
  padding-top: 5px;
}

.ribbon .caret {
  margin-top: 12px;
}

.ribbon .narrow {
  width: 34px;
}

.ribbon .pressed {
  background: #b5b8bc;
  border: 1px solid #555;
  padding-top: 11px;
  width: 60px;
}

.ribbon .broad {
  width: 64px;
}

.ribbon .sep {
  background: #444;
  margin: 2px 1px;
  width: 1px;
}

/* workspace: command tabs lie over the top left of the viewport */
.workspace {
  display: grid;
  flex: 1;
  grid-template-columns: 224px 1fr;
  grid-template-rows: 20px 1fr;
  min-height: 0;
}

.command-tabs {
  display: flex;
  grid-area: 1 / 1 / 2 / 3;
  justify-self: start;
  z-index: 1;
}

.command-tabs button {
  background: var(--gray);
  border: 1px solid var(--line);
  border-left: 0;
  border-top: 0;
  font-size: 12px;
  padding-bottom: 2px;
  width: 56px;
}

.command-tabs .active {
  background: var(--chrome);
}

.command-tabs .last {
  width: 75px;
}

.side {
  display: flex;
  grid-area: 2 / 1 / 3 / 2;
  min-height: 0;
}

.strip {
  align-items: center;
  background: linear-gradient(#e2e4e7 70px, #888 70px 71px, #d5d8dc 71px);
  display: flex;
  flex-direction: column;
  gap: 8px;
  padding-top: 8px;
  width: 28px;
}

.strip::before {
  border-top: 2px dotted #666;
  content: "";
  width: 22px;
}

.manager {
  background: var(--panel);
  border-right: 2px solid #222;
  border-top: 3px double #7480a0;
  display: flex;
  flex: 1;
  flex-direction: column;
  min-width: 0;
  padding-bottom: 2px;
  position: relative;
}

.manager-tabs {
  background: var(--chrome);
  display: flex;
  flex: none;
  height: 26px;
  padding-top: 4px;
}

.manager-tabs button {
  background: var(--gray);
  border: 1px solid var(--line);
  width: 28px;
}

.manager-tabs .active {
  background: var(--panel);
  border-bottom: 0;
  border-left: 0;
  width: 26px;
}

.manager-tabs .more {
  background: none;
  border: 0;
  margin-left: auto;
  width: 20px;
}

.filter {
  align-items: center;
  background: #eee;
  border: 1px solid #444;
  display: flex;
  flex: none;
  gap: 3px;
  height: 18px;
  margin: 1px 1px 3px 0;
  padding-left: 6px;
}

.tree {
  border-bottom: 2px solid #2a78d8;
  overflow: hidden;
}

.tree ul {
  background: repeating-linear-gradient(#777 0 1px, transparent 1px 2px) 8px 0 / 1px calc(100% - 9px) no-repeat;
  list-style: none;
  margin: 0;
  padding: 0 0 0 4px;
}

.tree ul ul {
  background-position: 23px 0;
  padding-left: 19px;
}

.row {
  align-items: center;
  display: flex;
  gap: 5px;
  height: 18px;
  white-space: nowrap;
}

.row.root {
  gap: 4px;
  padding-left: 1px;
}

.row .config {
  margin-left: 10px;
}

.row button {
  background: var(--panel);
  border: 1px solid #777;
  flex: none;
  font: 11px/9px var(--cjk);
  height: 9px;
  margin-right: 1px;
  width: 9px;
}

.row i {
  border-top: 1px dotted #777;
  flex: none;
  margin: 0 -5px 0 4px;
  width: 11px;
}

.scrollbar {
  display: flex;
  height: 16px;
  margin-top: auto;
}

.scrollbar button {
  background: var(--panel);
  font-size: 9px;
  width: 13px;
}

.track {
  background: repeating-conic-gradient(#fff 0 25%, #d4d0c8 0 50%) 0 0 / 2px 2px;
  flex: 1;
}

.thumb {
  background: var(--win);
  border: 1px solid;
  border-color: #fff #444 #444 #fff;
  height: 100%;
  width: 71%;
}

.flyout {
  background: var(--panel);
  border: 1px solid var(--line);
  border-left: 0;
  flex-direction: column;
  font-size: 6px;
  height: 39px;
  line-height: 9px;
  position: absolute;
  right: -10px;
  top: 250px;
  width: 10px;
  z-index: 1;
}

/* graphics area */
.viewport {
  background:
    linear-gradient(transparent 54%, #fff 72%),
    radial-gradient(60% 85% at 86% 56%, #d3d8e6, #dfe3ed 45%, transparent),
    linear-gradient(#fff 20%, #e9ecf4 60%);
  border-bottom: 1px solid #000;
  display: grid;
  grid-area: 1 / 2 / 3 / 3;
  min-height: 0;
  min-width: 0;
}

.viewport > * {
  grid-area: 1 / 1;
}

.model {
  height: 100%;
  width: 100%;
}

.axis {
  font: 11px "Liberation Mono", monospace;
}

.view-bar {
  align-self: start;
  display: grid;
  grid-template-columns: 1fr auto 1fr;
  padding-top: 6px;
}

.view-tools {
  grid-column: 2;
  padding-right: 4px;
}

.view-window {
  justify-self: end;
  padding-right: 8px;
}

.view-bar button {
  width: 23px;
}

.view-bar .drop {
  width: 14px;
}

.task-pane {
  align-self: start;
  justify-self: end;
  margin-top: 60px;
}

.task-pane button {
  background: #adafb2;
  border: 1px solid #222;
  border-right: 0;
  height: 24px;
  width: 24px;
}

.task-pane .active {
  background: #f0f1f4;
}

/* sheet tabs */
.sheet-tabs {
  background: linear-gradient(90deg, #d5d8dc 28px, var(--panel) 28px);
  border-bottom: 1px solid #777;
  display: flex;
  flex: none;
  height: 15px;
  padding-left: 30px;
}

.sheet-nav {
  display: flex;
  margin-right: 2px;
}

.sheet-nav button {
  background: #b4b6b9;
  border: 1px solid #8c8e91;
  width: 16px;
}

.sheet-nav svg {
  fill: #999;
  height: 10px;
  stroke: #888;
  width: 10px;
}

.sheet {
  background: var(--gray);
  border: 1px solid var(--line);
  border-top: 0;
  font-size: 12px;
  line-height: 12px;
  padding-bottom: 2px;
  width: 76px;
}

.sheet.active {
  background: var(--panel);
  width: 46px;
}

/* status bar */
.status {
  align-items: center;
  background: #aab4be;
  border-top: 1px solid #eee;
  display: flex;
  flex: none;
  gap: 3px;
  height: 20px;
}

.product {
  flex: 1;
  font: 10px/16px var(--mono);
  padding-left: 2px;
}

.cell {
  border: 1px solid;
  border-color: #777 #eee #eee #777;
  height: 17px;
  line-height: 14px;
  padding: 0 5px 0 1px;
}

.cell.blank {
  padding: 0;
  width: 5px;
}

.custom {
  gap: 18px;
  margin-left: 27px;
}

.custom span {
  font-size: 6px;
}

.help {
  margin-left: 12px;
}

.tag {
  margin: 0 6px 0 46px;
}

/* taskbar */
.taskbar {
  align-items: center;
  background: var(--win);
  border-top: 1px solid #fff;
  display: flex;
  flex: none;
  height: 43px;
  padding: 2px;
}

.start,
.tasks button {
  background: var(--win);
  border: 1px solid;
  border-color: #fff #444 #444 #fff;
  box-shadow: inset -1px -1px #888;
  height: 37px;
}

.start {
  gap: 1px;
  width: 47px;
}

.grip {
  border: 1px solid;
  border-color: #fff #888 #888 #fff;
  height: 34px;
  margin: 0 8px;
  width: 3px;
}

.launch {
  margin: 0 10px 0 7px;
}

.tasks {
  display: grid;
  flex: 1;
  gap: 2px;
  grid-template-columns: repeat(5, 1fr);
  min-width: 0;
}

.tasks button {
  gap: 3px;
  justify-content: flex-start;
  min-width: 0;
  overflow: hidden;
  padding-left: 3px;
}

.tasks .latin {
  font: 10px/16px var(--mono);
}

.tasks .active {
  background: #fff;
  border-color: #444 #fff #fff #444;
  box-shadow: inset 1px 1px #888;
  font-weight: 700;
}

.lang {
  align-items: center;
  display: flex;
  gap: 5px;
  padding-left: 2px;
  width: 69px;
}

.line {
  background: #888;
  border-right: 1px solid #fff;
  flex: none;
  height: 24px;
  width: 2px;
}

.stack {
  align-items: center;
  display: flex;
  flex-direction: column;
  gap: 4px;
}

.tray {
  align-items: center;
  border: 1px solid;
  border-color: #888 #fff #fff #888;
  display: flex;
  gap: 8px;
  height: 38px;
  padding: 0 1px 0 6px;
  position: relative;
  width: 422px;
}

.tray time {
  flex: 1;
  font: 10px/16px var(--mono);
  padding-bottom: 16px;
  text-align: center;
}

.watermark {
  bottom: 0;
  color: #fff;
  font: 17px/20px "DejaVu Sans", "Noto Sans CJK SC", sans-serif;
  position: absolute;
  right: 16px;
  text-shadow: 1px 0 #d81e28, -1px 0 #d81e28, 0 1px #d81e28, 0 -1px #d81e28;
  white-space: nowrap;
}
```
